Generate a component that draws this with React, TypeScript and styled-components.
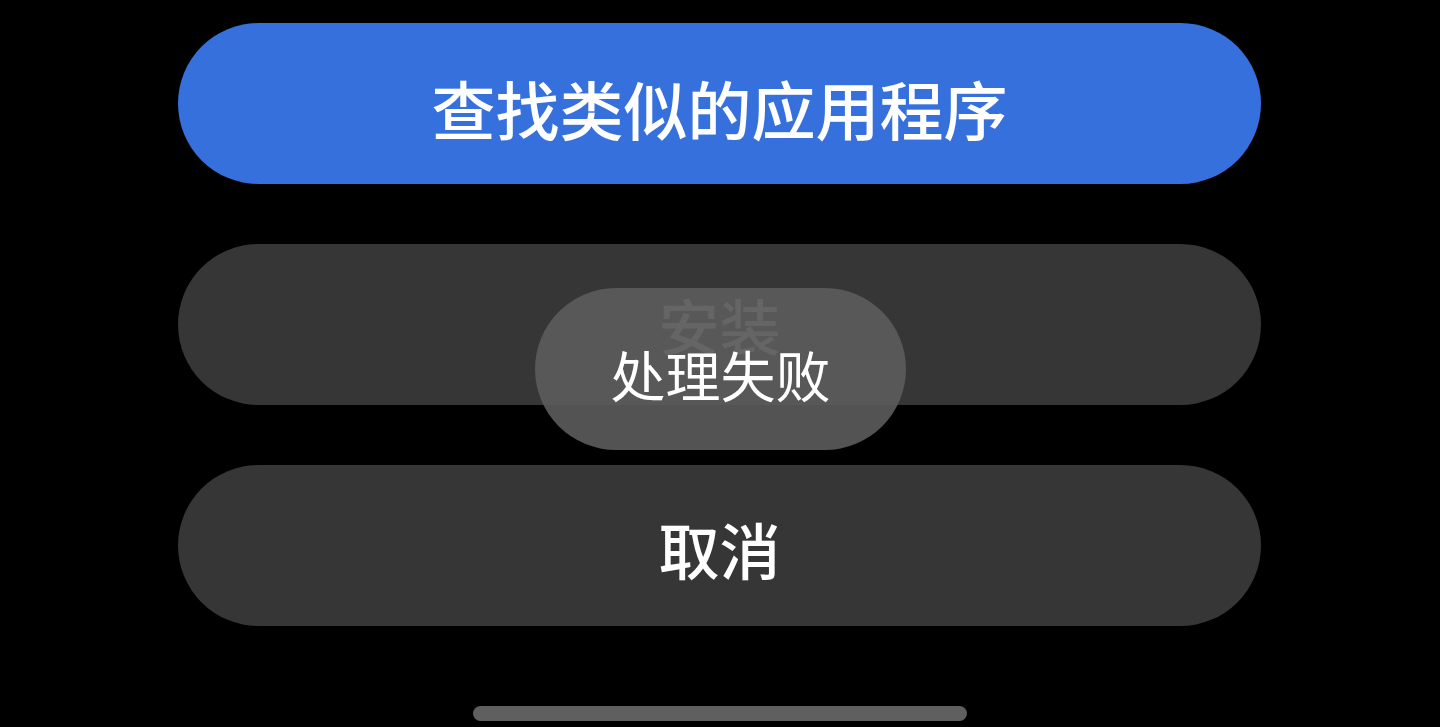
import React from "react";
import styled, { createGlobalStyle } from "styled-components";

const Global = createGlobalStyle`
  html, body {
    margin: 0;
    padding: 0;
    background: #000;
    font-family: "Noto Sans CJK SC", "Noto Sans", sans-serif;
  }
  #root { min-height: 727px; }
`;

const Screen = styled.div`
  position: relative;
  width: 1440px;
  height: 727px;
  background: #000;
  overflow: hidden;
`;

const Actions = styled.div`
  display: flex;
  flex-direction: column;
  gap: 60px;
  width: 1083px;
  padding: 23px 0 0 178px;
`;

const ActionButton = styled.button<{ $variant: "primary" | "secondary"; $disabled?: boolean }>`
  display: flex;
  align-items: center;
  justify-content: center;
  height: 161px;
  width: 100%;
  border: none;
  border-radius: 81px;
  padding: ${(p) => (p.$disabled ? "0" : "6px")} 0 0;
  background: ${(p) => (p.$variant === "primary" ? "#3670dd" : "#363636")};
  color: ${(p) => (p.$disabled ? "#b4b4b4" : "#ffffff")};
  font-family: "Noto Sans CJK SC", "Noto Sans", sans-serif;
  font-size: ${(p) => (p.$variant === "primary" ? "64px" : "61px")};
  font-weight: 500;
  letter-spacing: 0;
  line-height: 1;
`;

const Toast = styled.div`
  position: absolute;
  left: 535px;
  top: 288px;
  width: 371px;
  height: 162px;
  border-radius: 81px;
  background: rgba(92, 92, 92, 0.9);
  display: flex;
  align-items: center;
  justify-content: center;
  padding-top: 8px;
  box-sizing: border-box;
  color: #fff;
  font-size: 55px;
  font-weight: 400;
  line-height: 1;
`;

const HomeIndicator = styled.div`
  position: absolute;
  left: 473px;
  top: 706px;
  width: 494px;
  height: 15px;
  border-radius: 8px;
  background: #5f5f5f;
`;

export default function App() {
  return (
    <Screen>
      <Global />
      <Actions>
        <ActionButton $variant="primary">查找类似的应用程序</ActionButton>
        <ActionButton $variant="secondary" $disabled>安装</ActionButton>
        <ActionButton $variant="secondary">取消</ActionButton>
      </Actions>
      <Toast>处理失败</Toast>
      <HomeIndicator />
    </Screen>
  );
}
